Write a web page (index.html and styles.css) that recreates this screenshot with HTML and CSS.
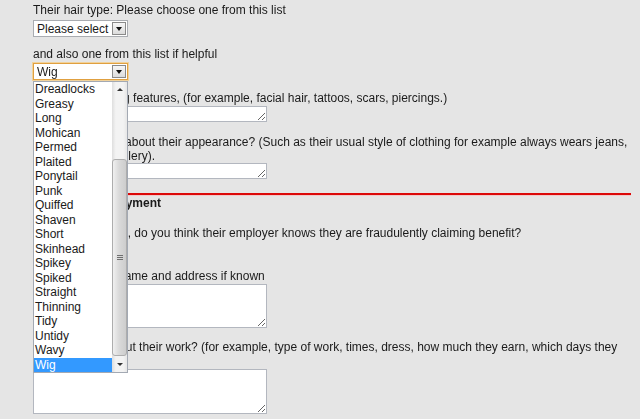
FILE: index.html
```html
<!DOCTYPE html>
<html lang="en">
<head>
    <meta charset="UTF-8">
    <meta name="viewport" content="width=device-width, initial-scale=1.0">
    <title>Report benefit fraud - description</title>
    <link rel="stylesheet" href="styles.css">
</head>
<body>

<div class="report">
    <div class="field field-hair">
        <div class="label">Their hair type: Please choose one from this list</div>
        <div class="select">
            <span class="select-value">Please select</span>
            <span class="select-btn"></span>
        </div>
    </div>

    <div class="field field-extra">
        <div class="label">and also one from this list if helpful</div>
        <div class="select select-open">
            <span class="select-value">Wig</span>
            <span class="select-btn"></span>

            <div class="dropdown">
                <ul class="options">
                    <li>Dreadlocks</li>
                    <li>Greasy</li>
                    <li>Long</li>
                    <li>Mohican</li>
                    <li>Permed</li>
                    <li>Plaited</li>
                    <li>Ponytail</li>
                    <li>Punk</li>
                    <li>Quiffed</li>
                    <li>Shaven</li>
                    <li>Short</li>
                    <li>Skinhead</li>
                    <li>Spikey</li>
                    <li>Spiked</li>
                    <li>Straight</li>
                    <li>Thinning</li>
                    <li>Tidy</li>
                    <li>Untidy</li>
                    <li>Wavy</li>
                    <li class="selected">Wig</li>
                </ul>
                <div class="scrollbar">
                    <span class="scroll-arrow scroll-up"></span>
                    <span class="scroll-track">
                        <span class="scroll-thumb"><span class="grip"></span></span>
                    </span>
                    <span class="scroll-arrow scroll-down"></span>
                </div>
            </div>
        </div>
    </div>

    <div class="field field-features">
        <div class="label">Any distinguishing features, (for example, facial hair, tattoos, scars, piercings.)</div>
        <textarea class="answer answer-short"></textarea>
    </div>

    <div class="field field-look">
        <div class="label">Is there anything about their appearance? (Such as their usual style of clothing for example always wears jeans, wears much jewellery).</div>
        <textarea class="answer answer-short answer-flush"></textarea>
    </div>

    <div class="rule"></div>

    <h3 class="section-title">Details of employment</h3>

    <div class="field field-knows">
        <div class="label">If they are in work, do you think their employer knows they are fraudulently claiming benefit?</div>
        <div class="select select-hidden">
            <span class="select-value">Please select</span>
            <span class="select-btn"></span>
        </div>
    </div>

    <div class="field field-employer">
        <div class="label">The employer's name and address if known</div>
        <textarea class="answer answer-tall"></textarea>
    </div>

    <div class="field field-work">
        <div class="label">Do you know about their work? (for example, type of work, times, dress, how much they earn, which days they work).</div>
        <textarea class="answer answer-tall answer-last"></textarea>
    </div>
</div>

</body>
</html>
```

FILE: styles.css
```css
body {
    margin: 0;
    background-color: #e5e5e5;
    font-family: "Liberation Sans", Arial, sans-serif;
    font-size: 12px;
    color: #1a1a1a;
    overflow: hidden;
}

.report {
    width: 598px;
    padding: 3px 0 0 33px;
}

.label {
    line-height: 14px;
}

.field-extra { margin-top: 10px; }
.field-features { margin-top: 11px; }
.field-look { margin-top: 13px; }
.field-knows { margin-top: 16px; }
.field-employer { margin-top: 8px; }
.field-work { margin-top: 12px; }

/* fake select boxes */
.select {
    position: relative;
    box-sizing: border-box;
    display: flex;
    align-items: center;
    width: 95px;
    height: 17px;
    margin-top: 3px;
    padding: 1px 1px 1px 3px;
    background: #fff;
    border: 1px solid #a9acb1;
}

.select-value {
    flex: 1;
    line-height: 14px;
    white-space: nowrap;
}

.select-btn {
    box-sizing: border-box;
    width: 14px;
    height: 13px;
    border: 1px solid #8a8a8a;
    background: linear-gradient(#f6f6f6, #dcdcdc);
    display: flex;
    align-items: center;
    justify-content: center;
}

.select-btn::before {
    content: "";
    border-left: 3px solid transparent;
    border-right: 3px solid transparent;
    border-top: 4px solid #111;
}

.select-open {
    margin-top: 2px;
    border-color: #e0a040;
    box-shadow: 0 0 0 1px #f1d29b;
}

.select-hidden {
    margin-top: 4px;
}

.dropdown {
    position: absolute;
    top: calc(100% + 2px);
    left: -1px;
    box-sizing: border-box;
    width: 95px;
    display: flex;
    background: #fff;
    border: 1px solid #a3a9b3;
    z-index: 5;
}

.options {
    flex: 1;
    list-style: none;
    margin: 0;
    padding: 0;
}

.options li {
    padding-left: 1px;
    line-height: 14.5px;
    white-space: nowrap;
}

.options .selected {
    background: #3399ff;
    color: #fff;
}

.scrollbar {
    width: 15px;
    display: flex;
    flex-direction: column;
    background: linear-gradient(to right, #dedede, #f3f3f3 25%, #f3f3f3 75%, #e6e6e6);
}

.scroll-arrow {
    height: 15px;
    display: flex;
    align-items: center;
    justify-content: center;
}

.scroll-up::before {
    content: "";
    border-left: 3px solid transparent;
    border-right: 3px solid transparent;
    border-bottom: 3px solid #333;
}

.scroll-down::before {
    content: "";
    border-left: 3px solid transparent;
    border-right: 3px solid transparent;
    border-top: 3px solid #333;
}

.scroll-track {
    flex: 1;
    display: flex;
    flex-direction: column;
    justify-content: flex-end;
    padding-bottom: 1px;
}

.scroll-thumb {
    box-sizing: border-box;
    height: 197px;
    border: 1px solid #adadad;
    border-radius: 3px;
    background: linear-gradient(to right, #f0f0f0, #dadada 45%, #cdcdcd);
    display: flex;
    align-items: center;
    justify-content: center;
}

.grip {
    width: 6px;
    height: 5px;
    background: repeating-linear-gradient(#6f6f6f 0 1px, transparent 1px 2px);
}

/* textareas */
.answer {
    display: block;
    box-sizing: border-box;
    width: 234px;
    margin: 1px 0 0;
    padding: 1px 2px;
    border: 1px solid #b3b7bf;
    background: #fff;
    font: inherit;
    color: inherit;
}

.answer-short { height: 16px; }
.answer-flush { margin-top: 0; }
.answer-tall { height: 44px; }
.answer-last { height: 45px; }

.rule {
    height: 2px;
    margin-top: 14px;
    background: #dc0808;
    box-shadow: 0 1px 0 #f2c9c9;
}

.section-title {
    margin: 1px 0 0;
    font-size: 12px;
    line-height: 14px;
    font-weight: bold;
}
```
